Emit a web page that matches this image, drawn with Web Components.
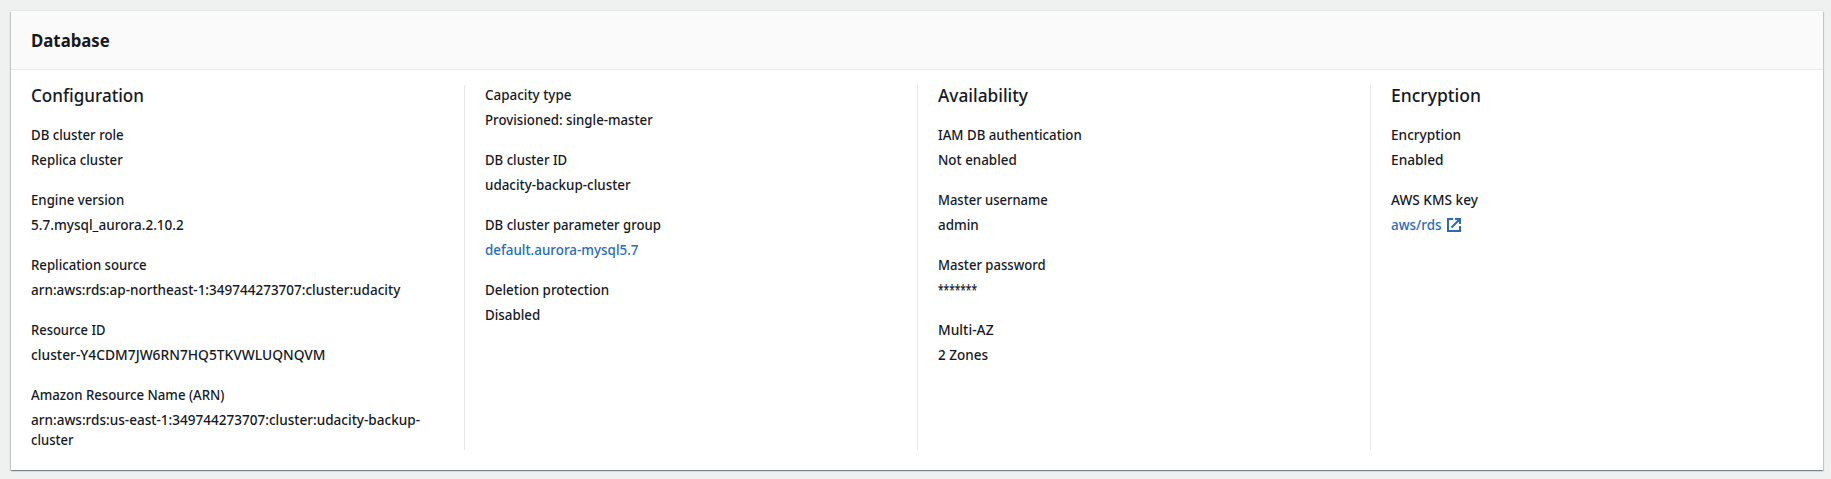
<!DOCTYPE html>
<html lang="en">
<head>
<meta charset="utf-8">
<title>Database</title>
<style>
html,body{margin:0;height:100%}
body{background:#eff1f1;color:#16191f;font:14px/20px "Noto Sans","Open Sans",sans-serif;overflow:hidden}
</style>
</head>
<body>
<db-panel>
  <fit-text slot="title" w="78.8">Database</fit-text>
  <db-column>
    <fit-text slot="heading" w="113">Configuration</fit-text>
    <db-field><fit-text slot="label" w="92.7">DB cluster role</fit-text><fit-text w="91.8">Replica cluster</fit-text></db-field>
    <db-field><fit-text slot="label" w="93.2">Engine version</fit-text><fit-text w="152.8">5.7.mysql_aurora.2.10.2</fit-text></db-field>
    <db-field><fit-text slot="label" w="115.7">Replication source</fit-text><fit-text w="369.3">arn:aws:rds:ap-northeast-1:349744273707:cluster:udacity</fit-text></db-field>
    <db-field><fit-text slot="label" w="74.5">Resource ID</fit-text><fit-text w="294.5">cluster-Y4CDM7JW6RN7HQ5TKVWLUQNQVM</fit-text></db-field>
    <db-field><fit-text slot="label" w="193.5">Amazon Resource Name (ARN)</fit-text><fit-text w="389">arn:aws:rds:us-east-1:349744273707:cluster:udacity-backup-</fit-text><fit-text w="42.5">cluster</fit-text></db-field>
  </db-column>
  <db-column divided>
    <db-field><fit-text slot="label" w="86.5">Capacity type</fit-text><fit-text w="167.8">Provisioned: single-master</fit-text></db-field>
    <db-field><fit-text slot="label" w="82.2">DB cluster ID</fit-text><fit-text w="145.7">udacity-backup-cluster</fit-text></db-field>
    <db-field><fit-text slot="label" w="176">DB cluster parameter group</fit-text><fit-text link w="153.5">default.aurora-mysql5.7</fit-text></db-field>
    <db-field><fit-text slot="label" w="124.2">Deletion protection</fit-text><fit-text w="55.3">Disabled</fit-text></db-field>
  </db-column>
  <db-column divided>
    <fit-text slot="heading" w="90">Availability</fit-text>
    <db-field><fit-text slot="label" w="143.7">IAM DB authentication</fit-text><fit-text w="78.7">Not enabled</fit-text></db-field>
    <db-field><fit-text slot="label" w="109.8">Master username</fit-text><fit-text w="40.8">admin</fit-text></db-field>
    <db-field><fit-text slot="label" w="107.6">Master password</fit-text><fit-text w="39">*******</fit-text></db-field>
    <db-field><fit-text slot="label" w="55.6">Multi-AZ</fit-text><fit-text w="50">2 Zones</fit-text></db-field>
  </db-column>
  <db-column divided>
    <fit-text slot="heading" w="90">Encryption</fit-text>
    <db-field><fit-text slot="label" w="70">Encryption</fit-text><fit-text w="52.6">Enabled</fit-text></db-field>
    <db-field><fit-text slot="label" w="87">AWS KMS key</fit-text><fit-text link w="50.5">aws/rds</fit-text><external-icon slot="icon"></external-icon></db-field>
  </db-column>
</db-panel>
<script>
const define = (name, html, setup) => customElements.define(name, class extends HTMLElement {
  constructor() {
    super();
    this.attachShadow({mode: 'open'}).innerHTML = html;
  }
  connectedCallback() { if (setup) setup(this); }
});

define('db-panel', `<style>
:host{display:block;box-sizing:border-box;height:479px;padding:11px 8px 9px 11px}
section{box-sizing:border-box;height:459px;background:#fff;box-shadow:0 1px 1px rgba(0,28,36,.3),1px 1px 1px rgba(0,28,36,.15),-1px 1px 1px rgba(0,28,36,.15),0 -1px 0 #e8eaea}
header{box-sizing:border-box;height:59px;padding:19px 19.5px 0;background:#fafafa;border-bottom:1px solid #e8eaea;font-size:18px;font-weight:700}
.columns{display:grid;grid-template-columns:repeat(4,1fr);height:365px;padding-top:15px}
</style><section><header><slot name="title"></slot></header><div class="columns"><slot></slot></div></section>`);

define('db-column', `<style>
:host{display:block;padding-left:19.5px;min-width:0}
:host([divided]){border-left:1px solid #e4e8e8}
.heading{font-size:18px;line-height:20px;font-weight:500}
.heading ::slotted(*){margin-bottom:20px}
.fields{display:flex;flex-direction:column;gap:20px}
</style><div class="heading"><slot name="heading"></slot></div><div class="fields"><slot></slot></div>`);

define('db-field', `<style>
:host{display:block;font-weight:500}
.label{margin-bottom:5px}
.value{display:flex;align-items:center}
.lines{display:flex;flex-direction:column}
</style><div class="label"><slot name="label"></slot></div><div class="value"><div class="lines"><slot></slot></div><slot name="icon"></slot></div>`);

/* Keeps a line of text at its designed width, whatever the installed face. */
define('fit-text', `<style>
:host{display:block;white-space:nowrap;height:20px}
:host([link]){color:#2a6ab8}
span{display:inline-block;transform-origin:0 50%}
</style><span><slot></slot></span>`, el => {
  const span = el.shadowRoot.querySelector('span');
  const width = Number(el.getAttribute('w'));
  requestAnimationFrame(() => {
    span.style.transform = `scaleX(${width / span.getBoundingClientRect().width})`;
    el.style.width = width + 'px';
  });
});

define('external-icon', `<style>
:host{display:block;width:14px;height:14px;margin-left:5.5px;color:#2a6ab8}
svg{display:block}
</style><svg width="14" height="14" viewBox="0 0 14 14" fill="none" stroke="currentColor" stroke-width="2"><path d="M6 1H1v12h12V8M8 1h5v5M13 1 4.5 9.5"/></svg>`);
</script>
</body>
</html>
